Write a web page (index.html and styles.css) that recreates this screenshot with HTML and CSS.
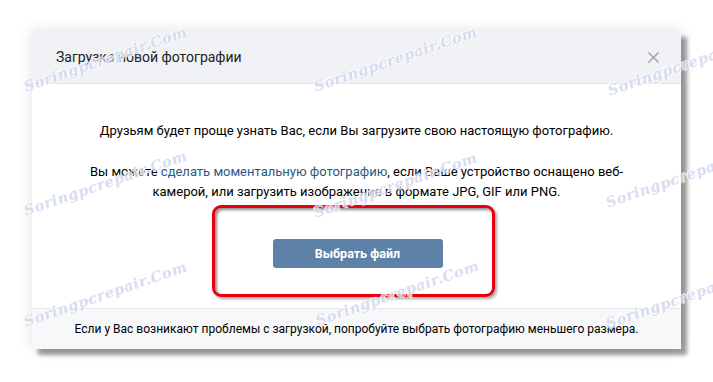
FILE: index.html
```html
<!DOCTYPE html>
<html lang="ru">
<head>
    <meta charset="UTF-8">
    <meta name="viewport" content="width=device-width, initial-scale=1.0">
    <title>Загрузка новой фотографии</title>
    <link rel="stylesheet" href="styles.css">
</head>
<body>
    <div class="popup">
        <div class="popup-head">
            <span class="popup-title">Загрузка новой фотографии</span>
            <span class="popup-close">
                <svg width="13" height="13" viewBox="0 0 13 13"><path d="M1.5 1.5 L11.5 11.5 M11.5 1.5 L1.5 11.5" stroke="#9a9ea5" stroke-width="1.4" fill="none"/></svg>
            </span>
        </div>
        <div class="popup-body">
            <p class="line-first">Друзьям будет проще узнать Вас, если Вы загрузите свою настоящую фотографию.</p>
            <p class="line-second">Вы можете <a href="#">сделать моментальную фотографию</a>, если Ваше устройство оснащено веб-<br>камерой, или загрузить изображение в формате JPG, GIF или PNG.</p>
            <div class="highlight">
                <button class="btn-file">Выбрать файл</button>
            </div>
        </div>
        <div class="popup-foot">Если у Вас возникают проблемы с загрузкой, попробуйте выбрать фотографию меньшего размера.</div>
    </div>

    <!-- водяные знаки поверх скриншота -->
    <div class="marks">
        <span class="mark" style="left: 24px; top: 78px;">Soringpcrepair.Com</span>
        <span class="mark" style="left: 314px; top: 78px;">Soringpcrepair.Com</span>
        <span class="mark" style="left: 608px; top: 82px;">Soringpcrepair.Com</span>
        <span class="mark" style="left: 24px; top: 202px;">Soringpcrepair.Com</span>
        <span class="mark" style="left: 314px; top: 204px;">Soringpcrepair.Com</span>
        <span class="mark" style="left: 606px; top: 194px;">Soringpcrepair.Com</span>
        <span class="mark" style="left: 24px; top: 313px;">Soringpcrepair.Com</span>
        <span class="mark" style="left: 316px; top: 312px;">Soringpcrepair.Com</span>
        <span class="mark" style="left: 606px; top: 315px;">Soringpcrepair.Com</span>
    </div>
</body>
</html>
```

FILE: styles.css
```css
body {
    font-family: 'Roboto', 'Open Sans', sans-serif;
    background-color: #fff;
    color: #000;
    margin: 0;
    padding: 31px 0 0 32px;
    position: relative;
    height: 351px;
    overflow: hidden;
}
.popup {
    width: 649px;
    background: #fff;
    box-shadow: 6px 6px 4px rgba(0, 0, 0, 0.38), 0 0 14px rgba(0, 0, 0, 0.12);
}
.popup-head {
    height: 52px;
    background-color: #f0f2f5;
    border-bottom: 1px solid #e4e6ea;
    display: flex;
    align-items: center;
    justify-content: space-between;
    padding: 0 21px 0 24px;
}
.popup-title {
    font-size: 14px;
    color: #222;
}
.popup-close {
    display: flex;
}
.popup-body {
    padding: 37px 20px 11px;
    text-align: center;
    font-size: 13px;
    color: #000;
    line-height: 20px;
}
.popup-body p {
    margin: 0;
}
.line-first {
    margin-bottom: 21px !important;
}
.popup-body a {
    color: #2a5885;
    text-decoration: none;
}
.highlight {
    width: 277px;
    height: 86px;
    margin: 3px 0 0 160px;
    border: 3px solid #e8000e;
    border-radius: 9px;
    display: flex;
    justify-content: center;
    align-items: center;
    box-shadow: inset 2px 2px 3px rgba(0, 0, 0, 0.45), 2px 2px 3px rgba(0, 0, 0, 0.35);
}
.btn-file {
    width: 170px;
    height: 29px;
    margin: 5px 0 0 8px;
    background-color: #5e81a8;
    color: #fff;
    border: none;
    border-radius: 3px;
    font-family: 'Roboto', sans-serif;
    font-size: 12.5px;
    font-weight: bold;
    cursor: pointer;
}
.popup-foot {
    height: 40px;
    border-top: 1px solid #e4e6ea;
    background-color: #f7f8fa;
    display: flex;
    align-items: center;
    justify-content: center;
    font-size: 12px;
    color: #000;
}
.marks {
    position: absolute;
    left: 0;
    top: 0;
    width: 713px;
    height: 382px;
    pointer-events: none;
}
.mark {
    position: absolute;
    font-family: 'DejaVu Serif', serif;
    font-style: italic;
    font-weight: bold;
    font-size: 14.5px;
    letter-spacing: 0.5px;
    color: #d3d8ee;
    text-shadow: 1px 1px 0 #fff, -1px -1px 0 #fff;
    transform: rotate(-19deg);
    transform-origin: left center;
    white-space: nowrap;
    opacity: 0.85;
}
```
